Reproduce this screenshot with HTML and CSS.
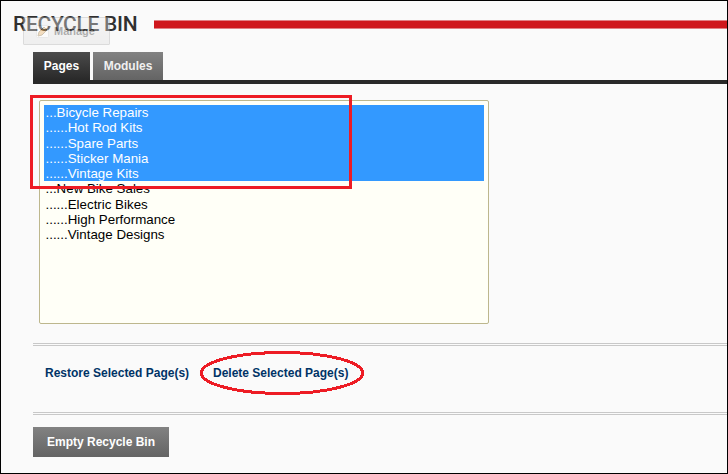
FILE: index.html
```html
<!DOCTYPE html>
<html lang="en">
<head>
<meta charset="utf-8">
<title>Recycle Bin</title>
<link rel="stylesheet" href="styles.css">
</head>
<body>
<main class="window">
  <header class="header">
    <h1 class="title">RECYCLE BIN</h1>
    <div class="rule"></div>
    <div class="manage">
      <svg width="13" height="13" viewBox="0 0 13 13"><rect x=".5" y=".5" width="12" height="12" rx="1" fill="#fff" stroke="#ccc"/><path d="M2 11l1-4 5-5 3 3-5 5z" fill="#e8b060" stroke="#8c6c3c"/></svg>
      <span>Manage</span>
    </div>
  </header>
  <section class="content">
    <nav class="tabs"><a class="tab active">Pages</a><a class="tab">Modules</a></nav>
    <div class="listwrap">
      <ul class="list">
        <li class="sel">...Bicycle Repairs</li>
        <li class="sel">......Hot Rod Kits</li>
        <li class="sel">......Spare Parts</li>
        <li class="sel">......Sticker Mania</li>
        <li class="sel">......Vintage Kits</li>
        <li>...New Bike Sales</li>
        <li>......Electric Bikes</li>
        <li>......High Performance</li>
        <li>......Vintage Designs</li>
      </ul>
      <div class="mark-box"></div>
    </div>
    <div class="actions">
      <a class="restore">Restore Selected Page(s)</a>
      <a class="delete">Delete Selected Page(s)
        <svg class="mark-oval" width="164" height="44" viewBox="0 0 164 44"><ellipse cx="82" cy="22" rx="80.5" ry="20.5" fill="none" stroke="#ed1c24" stroke-width="3" shape-rendering="crispEdges"/></svg>
      </a>
    </div>
    <button class="empty">Empty Recycle Bin</button>
  </section>
</main>
</body>
</html>
```
FILE: styles.css
```css
* { box-sizing: border-box; }
body { margin: 0; font-family: "Liberation Sans", Arial, sans-serif; }
.window { width: 728px; height: 474px; border: 1px solid #000; background: #fafafa; overflow: hidden; }
.header { position: relative; display: flex; align-items: flex-start; height: 51px; padding-left: 12px; }
.title { width: 141px; margin: 11px 0 0; font: 500 21px/24px Roboto, sans-serif; letter-spacing: -.3px; color: #303030; white-space: nowrap; }
.rule { flex: 1; height: 9px; margin-top: 19px; background: #cf171d; border: solid #e18085; border-width: 1px 0; }
.manage { position: absolute; left: 22px; top: 16px; width: 87px; height: 28px; padding-left: 12px; display: flex; align-items: center; gap: 5px; border: 1px solid #aaa; border-radius: 1px; background: linear-gradient(#eee, #ddd); color: #333; font-size: 11px; font-weight: bold; opacity: .38; }
.content { padding-left: 32px; }
.tabs { display: flex; gap: 3px; height: 32px; border-bottom: 4px solid #292929; }
.tab { width: 70px; height: 28px; background: linear-gradient(#828282, #646464); color: #f0f0f0; font-size: 12px; font-weight: bold; line-height: 28px; text-align: center; }
.tab.active { width: 57px; background: linear-gradient(#4b4b4b, #292929); color: #fff; }
.listwrap { position: relative; padding: 16px 0 0 6px; }
.list { width: 450px; height: 224px; margin: 0; padding: 4px; list-style: none; border: 1px solid #bdb78d; border-radius: 2px; background: #fffff7; color: #000; font-size: 13.33px; line-height: 15.25px; }
.list li { height: 15.25px; padding-left: 1.5px; }
.list .sel { background: #3399ff; color: #fff; }
.mark-box { position: absolute; left: -3px; top: 11px; width: 322px; height: 94px; border: 3px solid #ed1c24; }
.actions { display: flex; align-items: flex-start; height: 72px; margin-top: 19px; padding: 19px 0 0 12px; border: double #c8c8c8; border-width: 3px 0; color: #003366; font-size: 12px; font-weight: bold; line-height: 16px; white-space: nowrap; }
.restore { width: 168px; }
.delete { position: relative; }
.mark-oval { position: absolute; left: -13px; top: -14px; }
.empty { display: block; width: 136px; height: 30px; margin-top: 12px; padding: 0; border: 0; background: linear-gradient(#828282, #646464); color: #fff; font: bold 12px/30px "Liberation Sans", Arial, sans-serif; }
```
